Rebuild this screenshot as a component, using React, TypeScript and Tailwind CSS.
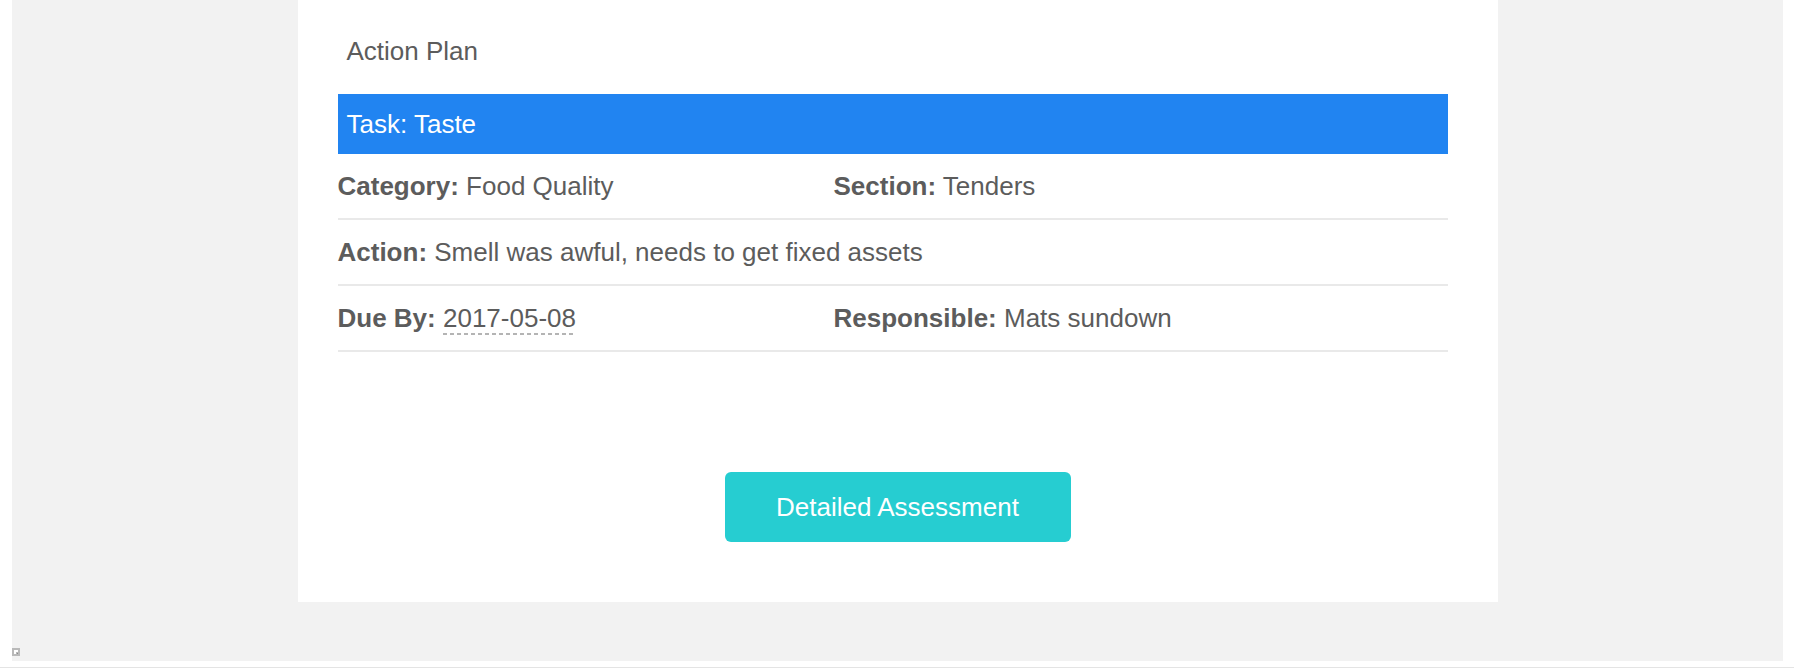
import React from 'react'

const FONT = { fontFamily: '"Liberation Sans", Arial, Helvetica, sans-serif' }

function Field({ label, value, dashed }: { label: string; value: string; dashed?: boolean }) {
    return (
        <div className="whitespace-nowrap">
            <span className="font-bold">{label}</span>{' '}
            {dashed
                ? <span className="pb-[2px] bg-[linear-gradient(to_right,#b4b4b4_58%,transparent_0)] bg-[length:7px_1.5px] bg-repeat-x bg-bottom">{value}</span>
                : <span>{value}</span>}
        </div>
    )
}

function Row({ children }: { children: React.ReactNode }) {
    return (
        <div className="flex items-center h-[66px] border-b-2 border-[#e9e9e9]">
            {children}
        </div>
    )
}

export default function App() {
    return (
        <div className="w-full h-[668px] bg-white text-[26px] text-[#5c5c5c]" style={FONT}>
            <div className="pl-[12px] pr-[11px]">
                <div className="h-[661px] bg-[#f2f2f2] flex flex-col">
                    <div className="w-[1200px] h-[602px] mx-auto bg-white pl-[40px] pr-[50px] pt-[36px] flex flex-col">
                        <div className="leading-[30px] px-[9px]">Action Plan</div>

                        <div className="mt-[28px] h-[60px] bg-[#2184f1] text-white flex items-center px-[9px]">
                            Task: Taste
                        </div>

                        <Row>
                            <div className="w-[496px]"><Field label="Category:" value="Food Quality" /></div>
                            <Field label="Section:" value="Tenders" />
                        </Row>
                        <Row>
                            <Field label="Action:" value="Smell was awful, needs to get fixed assets" />
                        </Row>
                        <Row>
                            <div className="w-[496px]"><Field label="Due By:" value="2017-05-08" dashed /></div>
                            <Field label="Responsible:" value="Mats sundown" />
                        </Row>

                        <div className="mt-[120px] pl-[10px] flex justify-center">
                            <button className="w-[346px] h-[70px] rounded-[6px] bg-[#26cdd1] text-white text-[26px]">
                                Detailed Assessment
                            </button>
                        </div>
                    </div>

                    <div className="mt-auto mb-[5px]">
                        <svg width="8" height="8" viewBox="0 0 8 8" className="block">
                            <rect width="8" height="8" fill="#b9b9b9" />
                            <path d="M2 2h4v2H4v2H2z" fill="#ffffff" />
                            <rect x="5" y="5" width="1" height="1" fill="#8a8a8a" />
                        </svg>
                    </div>
                </div>
            </div>
            <div className="mt-[6px] border-b border-[#e4e4e4]" />
        </div>
    )
}
